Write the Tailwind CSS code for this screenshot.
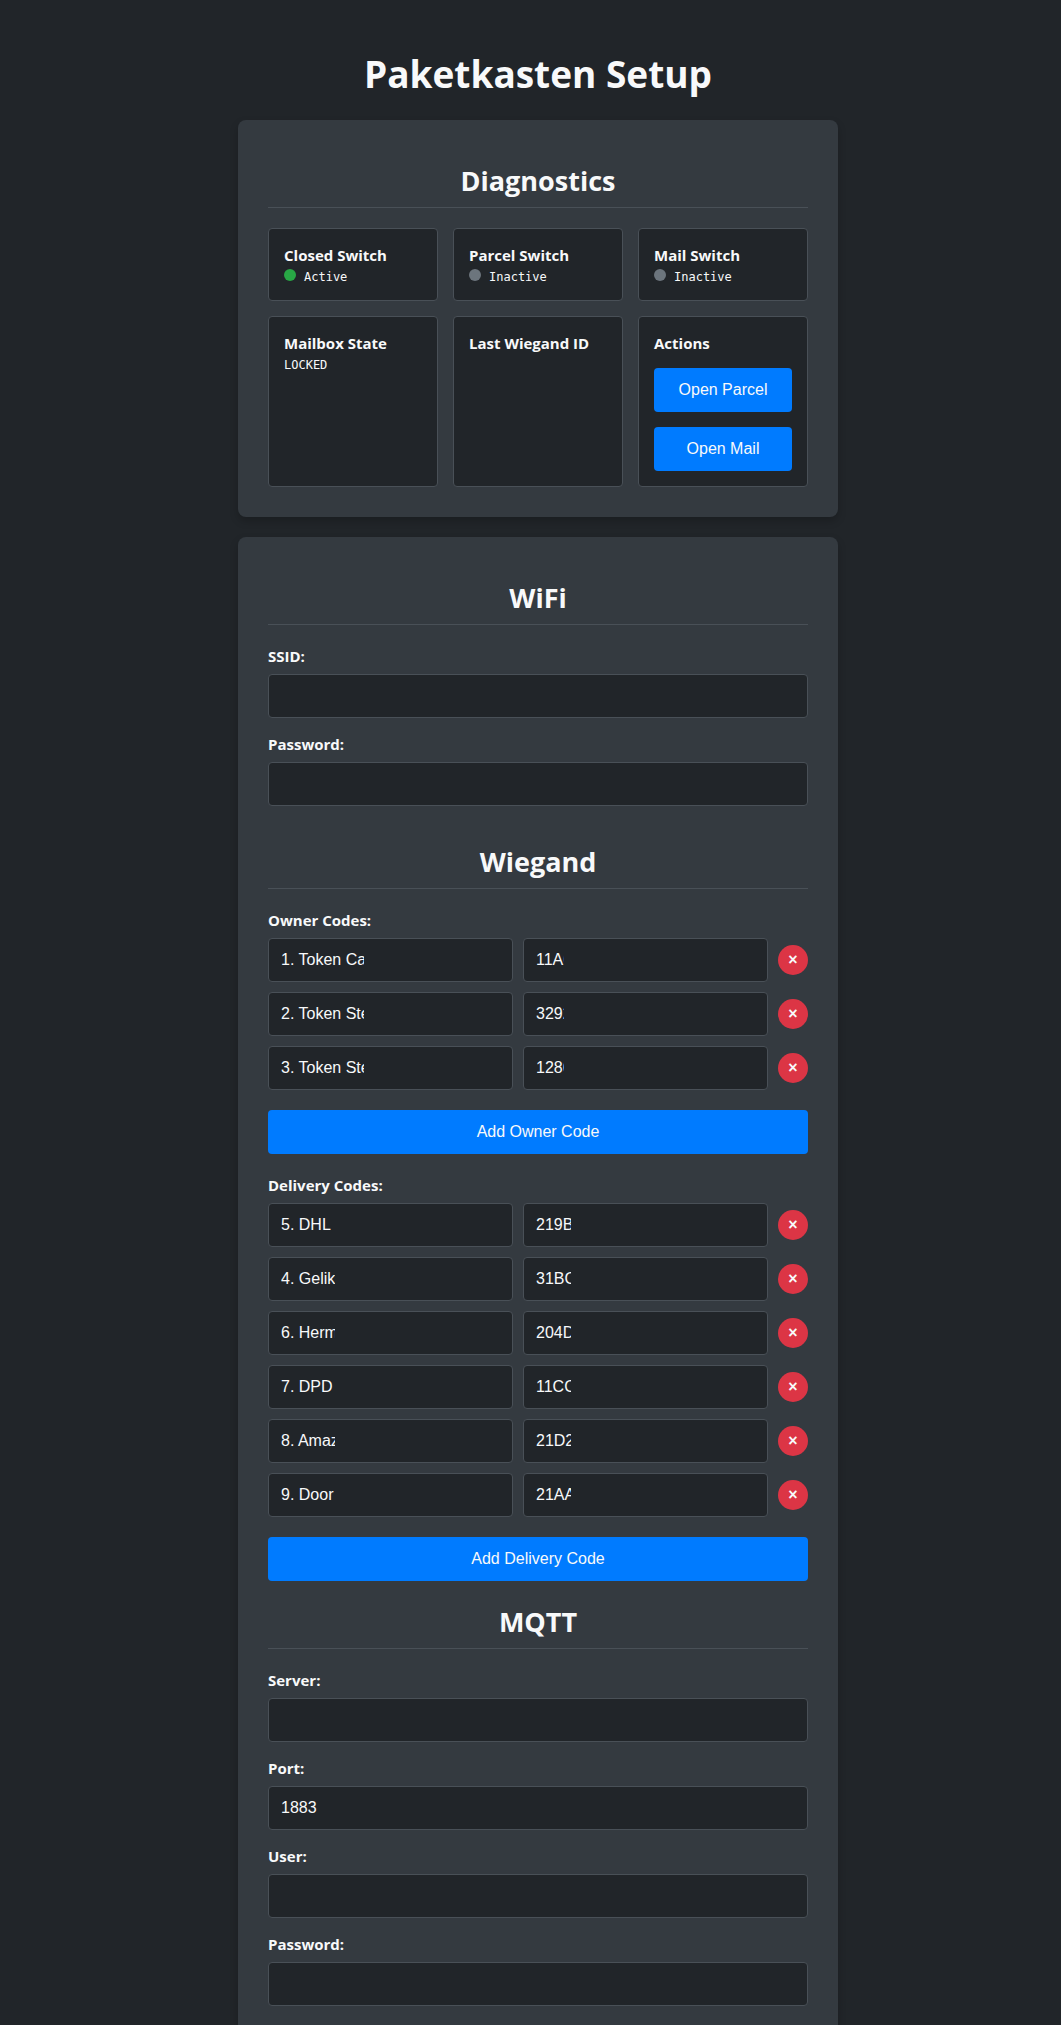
<!DOCTYPE html>
<html lang="en">
<head>
<meta charset="utf-8">
<meta name="viewport" content="width=device-width, initial-scale=1">
<title>Paketkasten Setup</title>
<script src="https://cdn.jsdelivr.net/npm/@tailwindcss/browser@4"></script>
</head>
<body class="bg-[#212529] text-[#f8f9fa] font-['Open_Sans',sans-serif] text-[15px] leading-[22px]">
<main class="flex min-h-screen flex-col items-center pl-[15px]">
  <h1 class="mt-11 mb-4 text-[37px] leading-[60px] font-bold">Paketkasten Setup</h1>

  <section class="w-full max-w-[600px] rounded-lg bg-[#343a40] p-[30px] shadow-[0_4px_8px_rgba(0,0,0,0.2)]">
    <h2 class="mt-3 mb-5 border-b border-[#495057] pb-2 text-center text-[27px] leading-[37px] font-bold">Diagnostics</h2>
    <div class="grid grid-cols-3 gap-[15px]">
      <div class="rounded border border-[#495057] bg-[#212529] p-[15px]">
        <h3 class="font-bold">Closed Switch</h3>
        <p class="flex h-[19px] items-baseline gap-2 font-['DejaVu_Sans_Mono',monospace] text-xs leading-[22px]"><span class="size-3 shrink-0 rounded-full bg-[#28a745]"></span>Active</p>
      </div>
      <div class="rounded border border-[#495057] bg-[#212529] p-[15px]">
        <h3 class="font-bold">Parcel Switch</h3>
        <p class="flex h-[19px] items-baseline gap-2 font-['DejaVu_Sans_Mono',monospace] text-xs leading-[22px]"><span class="size-3 shrink-0 rounded-full bg-[#6c757d]"></span>Inactive</p>
      </div>
      <div class="rounded border border-[#495057] bg-[#212529] p-[15px]">
        <h3 class="font-bold">Mail Switch</h3>
        <p class="flex h-[19px] items-baseline gap-2 font-['DejaVu_Sans_Mono',monospace] text-xs leading-[22px]"><span class="size-3 shrink-0 rounded-full bg-[#6c757d]"></span>Inactive</p>
      </div>
      <div class="rounded border border-[#495057] bg-[#212529] p-[15px]">
        <h3 class="font-bold">Mailbox State</h3>
        <p class="font-['DejaVu_Sans_Mono',monospace] text-xs leading-[22px]">LOCKED</p>
      </div>
      <div class="rounded border border-[#495057] bg-[#212529] p-[15px]">
        <h3 class="font-bold">Last Wiegand ID</h3>
      </div>
      <div class="rounded border border-[#495057] bg-[#212529] p-[15px]">
        <h3 class="mb-3.5 font-bold">Actions</h3>
        <div class="flex flex-col gap-[15px]">
          <button type="button" class="h-11 rounded bg-[#007bff] font-['Liberation_Sans',sans-serif] text-base">Open Parcel</button>
          <button type="button" class="h-11 rounded bg-[#007bff] font-['Liberation_Sans',sans-serif] text-base">Open Mail</button>
        </div>
      </div>
    </div>
  </section>

  <form class="mt-5 w-full max-w-[600px] flex-1 rounded-t-lg bg-[#343a40] px-[30px] pt-[30px] pb-[19px] shadow-[0_4px_8px_rgba(0,0,0,0.2)]">
    <section>
      <h2 class="mt-3 mb-5 border-b border-[#495057] pb-2 text-center text-[27px] leading-[37px] font-bold">WiFi</h2>
      <div class="flex flex-col gap-[15px]">
        <div class="flex flex-col gap-[7px]">
          <label for="ssid" class="font-bold">SSID:</label>
          <input id="ssid" type="text" class="h-11 w-full rounded border border-[#495057] bg-[#212529] px-3 font-['Liberation_Sans',sans-serif] text-base">
        </div>
        <div class="flex flex-col gap-[7px]">
          <label for="wifi-password" class="font-bold">Password:</label>
          <input id="wifi-password" type="password" class="h-11 w-full rounded border border-[#495057] bg-[#212529] px-3 font-['Liberation_Sans',sans-serif] text-base">
        </div>
      </div>
    </section>

    <section class="mt-[37px]">
      <h2 class="mb-5 border-b border-[#495057] pb-2 text-center text-[27px] leading-[37px] font-bold">Wiegand</h2>
      <fieldset class="min-w-0">
        <legend class="mb-[7px] font-bold">Owner Codes:</legend>
        <div class="flex flex-col gap-2.5 font-['Liberation_Sans',sans-serif] text-base">
          <div class="grid grid-cols-[minmax(0,1fr)_minmax(0,1fr)_30px] items-center gap-2.5">
            <input type="text" aria-label="Owner name 1" value="1. Token Ca" class="h-11 w-full rounded border border-[#495057] bg-[#212529] pl-3 pr-[148px]">
            <input type="text" aria-label="Owner code 1" value="11A6" class="h-11 w-full rounded border border-[#495057] bg-[#212529] pl-3 pr-[203px]">
            <button type="button" aria-label="Remove owner code 1" class="size-[30px] rounded-full bg-[#dc3545] font-bold">×</button>
          </div>
          <div class="grid grid-cols-[minmax(0,1fr)_minmax(0,1fr)_30px] items-center gap-2.5">
            <input type="text" aria-label="Owner name 2" value="2. Token Ste" class="h-11 w-full rounded border border-[#495057] bg-[#212529] pl-3 pr-[148px]">
            <input type="text" aria-label="Owner code 2" value="3292" class="h-11 w-full rounded border border-[#495057] bg-[#212529] pl-3 pr-[203px]">
            <button type="button" aria-label="Remove owner code 2" class="size-[30px] rounded-full bg-[#dc3545] font-bold">×</button>
          </div>
          <div class="grid grid-cols-[minmax(0,1fr)_minmax(0,1fr)_30px] items-center gap-2.5">
            <input type="text" aria-label="Owner name 3" value="3. Token Ste" class="h-11 w-full rounded border border-[#495057] bg-[#212529] pl-3 pr-[148px]">
            <input type="text" aria-label="Owner code 3" value="1286" class="h-11 w-full rounded border border-[#495057] bg-[#212529] pl-3 pr-[203px]">
            <button type="button" aria-label="Remove owner code 3" class="size-[30px] rounded-full bg-[#dc3545] font-bold">×</button>
          </div>
          <button type="button" class="mt-2.5 h-11 w-full rounded bg-[#007bff]">Add Owner Code</button>
        </div>
      </fieldset>

      <fieldset class="mt-5 min-w-0">
        <legend class="mb-[7px] font-bold">Delivery Codes:</legend>
        <div class="flex flex-col gap-2.5 font-['Liberation_Sans',sans-serif] text-base">
          <div class="grid grid-cols-[minmax(0,1fr)_minmax(0,1fr)_30px] items-center gap-2.5">
            <input type="text" aria-label="Delivery name 1" value="5. DHL" class="h-11 w-full rounded border border-[#495057] bg-[#212529] pl-3 pr-[177px]">
            <input type="text" aria-label="Delivery code 1" value="219B" class="h-11 w-full rounded border border-[#495057] bg-[#212529] pl-3 pr-[196px]">
            <button type="button" aria-label="Remove delivery code 1" class="size-[30px] rounded-full bg-[#dc3545] font-bold">×</button>
          </div>
          <div class="grid grid-cols-[minmax(0,1fr)_minmax(0,1fr)_30px] items-center gap-2.5">
            <input type="text" aria-label="Delivery name 2" value="4. Gelik" class="h-11 w-full rounded border border-[#495057] bg-[#212529] pl-3 pr-[177px]">
            <input type="text" aria-label="Delivery code 2" value="31BC" class="h-11 w-full rounded border border-[#495057] bg-[#212529] pl-3 pr-[196px]">
            <button type="button" aria-label="Remove delivery code 2" class="size-[30px] rounded-full bg-[#dc3545] font-bold">×</button>
          </div>
          <div class="grid grid-cols-[minmax(0,1fr)_minmax(0,1fr)_30px] items-center gap-2.5">
            <input type="text" aria-label="Delivery name 3" value="6. Herm" class="h-11 w-full rounded border border-[#495057] bg-[#212529] pl-3 pr-[177px]">
            <input type="text" aria-label="Delivery code 3" value="204D" class="h-11 w-full rounded border border-[#495057] bg-[#212529] pl-3 pr-[196px]">
            <button type="button" aria-label="Remove delivery code 3" class="size-[30px] rounded-full bg-[#dc3545] font-bold">×</button>
          </div>
          <div class="grid grid-cols-[minmax(0,1fr)_minmax(0,1fr)_30px] items-center gap-2.5">
            <input type="text" aria-label="Delivery name 4" value="7. DPD" class="h-11 w-full rounded border border-[#495057] bg-[#212529] pl-3 pr-[177px]">
            <input type="text" aria-label="Delivery code 4" value="11CC" class="h-11 w-full rounded border border-[#495057] bg-[#212529] pl-3 pr-[196px]">
            <button type="button" aria-label="Remove delivery code 4" class="size-[30px] rounded-full bg-[#dc3545] font-bold">×</button>
          </div>
          <div class="grid grid-cols-[minmax(0,1fr)_minmax(0,1fr)_30px] items-center gap-2.5">
            <input type="text" aria-label="Delivery name 5" value="8. Amaz" class="h-11 w-full rounded border border-[#495057] bg-[#212529] pl-3 pr-[177px]">
            <input type="text" aria-label="Delivery code 5" value="21D2" class="h-11 w-full rounded border border-[#495057] bg-[#212529] pl-3 pr-[196px]">
            <button type="button" aria-label="Remove delivery code 5" class="size-[30px] rounded-full bg-[#dc3545] font-bold">×</button>
          </div>
          <div class="grid grid-cols-[minmax(0,1fr)_minmax(0,1fr)_30px] items-center gap-2.5">
            <input type="text" aria-label="Delivery name 6" value="9. Door" class="h-11 w-full rounded border border-[#495057] bg-[#212529] pl-3 pr-[177px]">
            <input type="text" aria-label="Delivery code 6" value="21AA" class="h-11 w-full rounded border border-[#495057] bg-[#212529] pl-3 pr-[196px]">
            <button type="button" aria-label="Remove delivery code 6" class="size-[30px] rounded-full bg-[#dc3545] font-bold">×</button>
          </div>
          <button type="button" class="mt-2.5 h-11 w-full rounded bg-[#007bff]">Add Delivery Code</button>
        </div>
      </fieldset>
    </section>

    <section class="mt-[22px]">
      <h2 class="mb-5 border-b border-[#495057] pb-2 text-center text-[27px] leading-[37px] font-bold">MQTT</h2>
      <div class="flex flex-col gap-[15px]">
        <div class="flex flex-col gap-[7px]">
          <label for="server" class="font-bold">Server:</label>
          <input id="server" type="text" class="h-11 w-full rounded border border-[#495057] bg-[#212529] px-3 font-['Liberation_Sans',sans-serif] text-base">
        </div>
        <div class="flex flex-col gap-[7px]">
          <label for="port" class="font-bold">Port:</label>
          <input id="port" type="text" inputmode="numeric" value="1883" class="h-11 w-full rounded border border-[#495057] bg-[#212529] px-3 font-['Liberation_Sans',sans-serif] text-base">
        </div>
        <div class="flex flex-col gap-[7px]">
          <label for="user" class="font-bold">User:</label>
          <input id="user" type="text" class="h-11 w-full rounded border border-[#495057] bg-[#212529] px-3 font-['Liberation_Sans',sans-serif] text-base">
        </div>
        <div class="flex flex-col gap-[7px]">
          <label for="mqtt-password" class="font-bold">Password:</label>
          <input id="mqtt-password" type="password" class="h-11 w-full rounded border border-[#495057] bg-[#212529] px-3 font-['Liberation_Sans',sans-serif] text-base">
        </div>
      </div>
    </section>
  </form>
</main>
</body>
</html>
